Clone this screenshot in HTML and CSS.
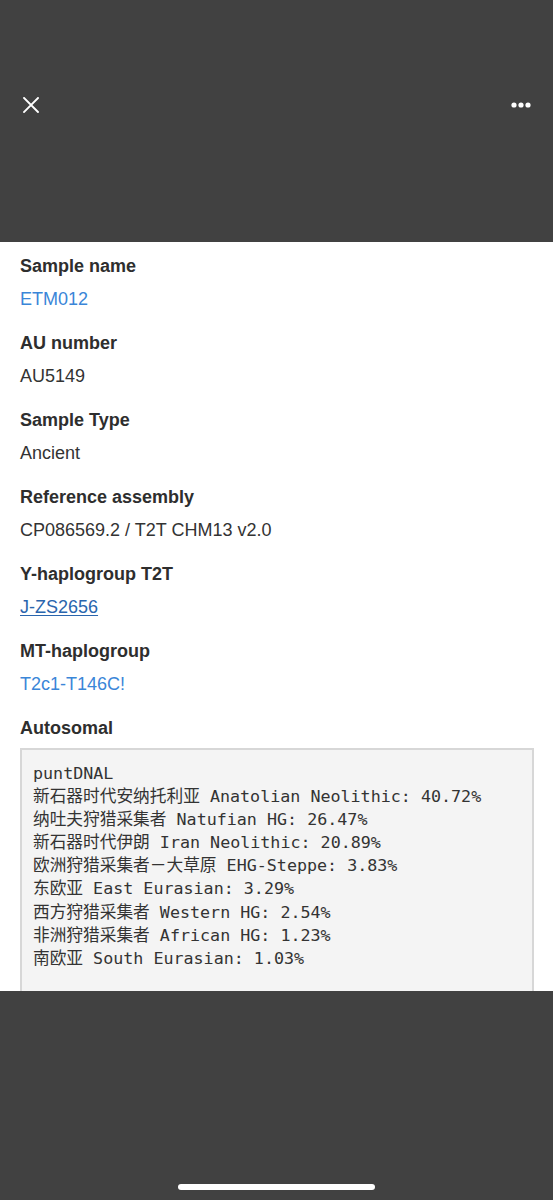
FILE: index.html
```html
<!DOCTYPE html>
<html lang="en">
<head>
<meta charset="utf-8">
<title>Sample ETM012</title>
<link rel="stylesheet" href="styles.css">
</head>
<body>
<div class="screen">
  <header class="topbar">
    <button class="icon-btn close-btn" aria-label="Close">
      <svg width="16" height="16" viewBox="0 0 16 16"><path d="M1 1 L15 15 M15 1 L1 15" stroke="#fff" stroke-width="1.9" stroke-linecap="square" fill="none"/></svg>
    </button>
    <button class="icon-btn more-btn" aria-label="More">
      <svg width="20" height="6" viewBox="0 0 20 6"><circle cx="3" cy="3" r="2.6" fill="#fff"/><circle cx="10" cy="3" r="2.6" fill="#fff"/><circle cx="17" cy="3" r="2.6" fill="#fff"/></svg>
    </button>
  </header>

  <main class="sheet">
    <div class="field">
      <div class="label">Sample name</div>
      <div class="value"><a class="link" href="#">ETM012</a></div>
    </div>
    <div class="field">
      <div class="label">AU number</div>
      <div class="value">AU5149</div>
    </div>
    <div class="field">
      <div class="label">Sample Type</div>
      <div class="value">Ancient</div>
    </div>
    <div class="field">
      <div class="label">Reference assembly</div>
      <div class="value">CP086569.2 / T2T CHM13 v2.0</div>
    </div>
    <div class="field">
      <div class="label">Y-haplogroup T2T</div>
      <div class="value"><a class="link link-underline" href="#">J-ZS2656</a></div>
    </div>
    <div class="field">
      <div class="label">MT-haplogroup</div>
      <div class="value"><a class="link" href="#">T2c1-T146C!</a></div>
    </div>
    <div class="field field-last">
      <div class="label">Autosomal</div>
<pre class="code">puntDNAL
新石器时代安纳托利亚 Anatolian Neolithic: 40.72%
纳吐夫狩猎采集者 Natufian HG: 26.47%
新石器时代伊朗 Iran Neolithic: 20.89%
欧洲狩猎采集者－大草原 EHG-Steppe: 3.83%
东欧亚 East Eurasian: 3.29%
西方狩猎采集者 Western HG: 2.54%
非洲狩猎采集者 African HG: 1.23%
南欧亚 South Eurasian: 1.03%


</pre>
    </div>
  </main>

  <footer class="bottombar">
    <div class="home-indicator"></div>
  </footer>
</div>
</body>
</html>
```

FILE: styles.css
```css
* { box-sizing: border-box; }

html, body {
  margin: 0;
  padding: 0;
  background: #414141;
}

.screen {
  width: 553px;
  height: 1200px;
  display: flex;
  flex-direction: column;
  overflow: hidden;
  font-family: "Liberation Sans", Arial, sans-serif;
}

.topbar {
  height: 242px;
  flex: 0 0 242px;
  background: #414141;
  display: flex;
  justify-content: space-between;
  align-items: flex-start;
  padding: 97px 22px 0 23px;
}

.icon-btn {
  border: 0;
  background: none;
  padding: 0;
  margin: 0;
  display: block;
  line-height: 0;
}

.more-btn {
  margin-top: 5px;
}

.sheet {
  flex: 0 0 749px;
  height: 749px;
  overflow: hidden;
  background: #fff;
  padding: 13px 19px 0 20px;
}

.field {
  margin-bottom: 22px;
}

.label {
  font-weight: bold;
  font-size: 18px;
  line-height: 22px;
  color: #2e2e2e;
}

.value {
  margin-top: 11px;
  font-size: 18px;
  line-height: 22px;
  color: #333;
}

.link {
  color: #3a86d8;
  text-decoration: none;
}

.link-underline {
  color: #2a65ad;
  text-decoration: underline;
  text-underline-offset: 2px;
}

.code {
  margin: 9px 0 0 0;
  border: 2px solid #d7d7d7;
  background: #f4f4f4;
  padding: 12px 12px 12px 11px;
  font-family: "DejaVu Sans Mono", "Noto Sans CJK SC", monospace;
  font-size: 16.7px;
  line-height: 23.1px;
  color: #333;
  white-space: pre;
  overflow: hidden;
}

.bottombar {
  flex: 0 0 209px;
  background: #414141;
  display: flex;
  flex-direction: column;
  justify-content: flex-end;
  align-items: center;
  padding-bottom: 10px;
}

.home-indicator {
  width: 197px;
  height: 6px;
  border-radius: 3px;
  background: #fff;
}
```
